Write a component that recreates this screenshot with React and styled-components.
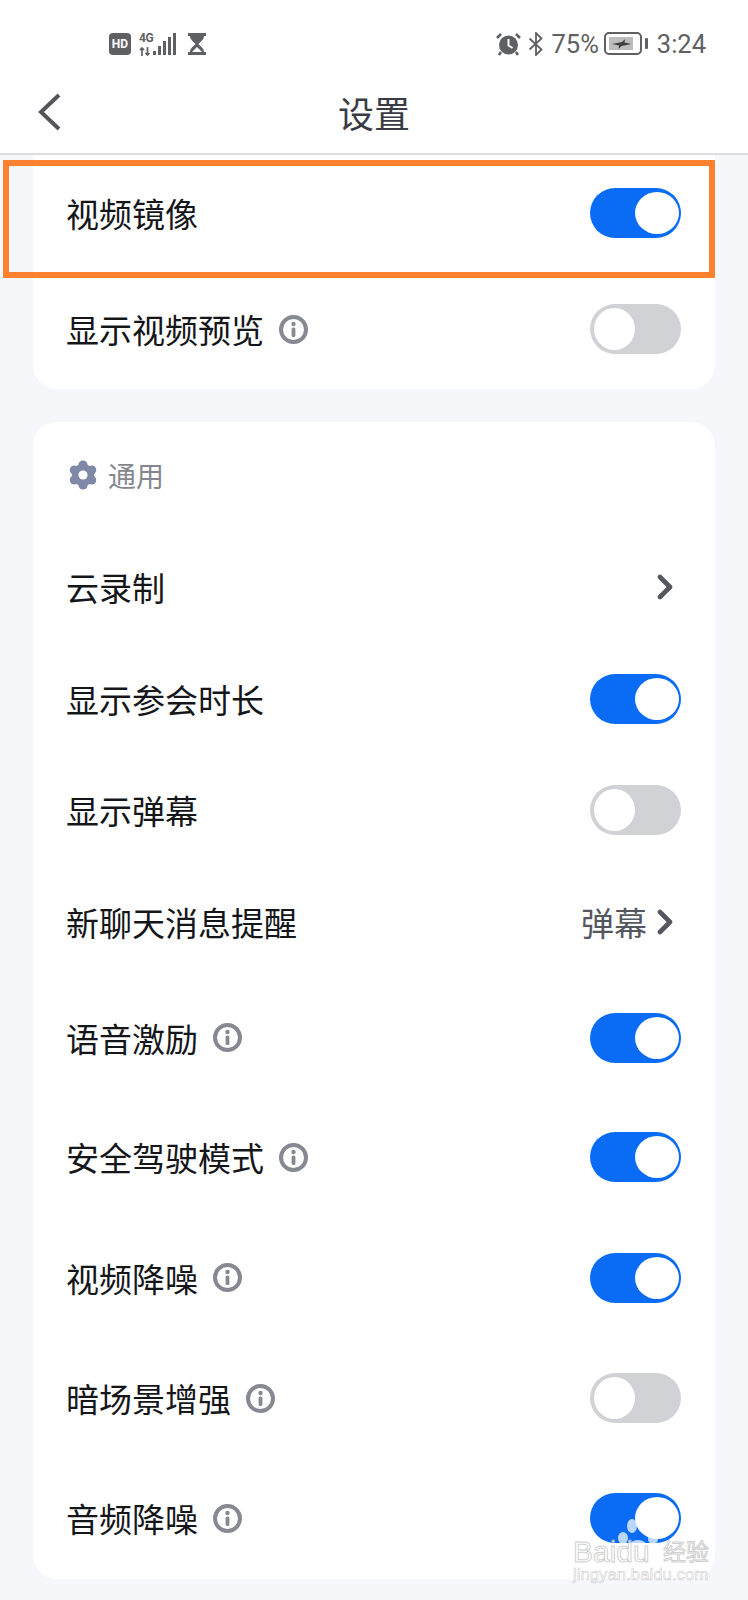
import React from "react";
import styled, { createGlobalStyle } from "styled-components";

const GlobalStyle = createGlobalStyle`
  html, body {
    margin: 0;
    padding: 0;
    background: #f6f7fb;
  }
  * {
    box-sizing: border-box;
  }
`;

const FONT = `"Noto Sans CJK SC", "Noto Sans", sans-serif`;

const Page = styled.div`
  position: relative;
  width: 748px;
  height: 1600px;
  overflow: hidden;
  background: #f6f7fb;
  font-family: ${FONT};
  color: #15161a;
`;

const Top = styled.div`
  background: #fff;
  border-bottom: 2px solid #dcdde0;
`;

const StatusBar = styled.div`
  height: 77px;
  padding: 10px 42px 0 109px;
  display: flex;
  align-items: center;
  justify-content: space-between;
  color: #5f6063;
  font-family: "Roboto", sans-serif;
`;

const StatusGroup = styled.div`
  display: flex;
  align-items: center;
  margin-left: ${(p) => p.$left || 0}px;
`;

const StatusText = styled.span`
  font-size: 25.5px;
  line-height: 30px;
  margin-left: ${(p) => p.$left || 0}px;
`;

const HdBadge = styled.span`
  width: 22px;
  height: 22px;
  border-radius: 4px;
  background: #5f6063;
  color: #fff;
  font: bold 12px/22px "Roboto", sans-serif;
  text-align: center;
`;

const Network = styled.div`
  margin-left: 8px;
  display: flex;
  align-items: center;
  height: 24px;
`;

const NetColumn = styled.div`
  width: 14px;
  height: 24px;
  display: flex;
  flex-direction: column;
  justify-content: space-between;
`;

const NetLabel = styled.span`
  font: bold 12px/12px "Roboto", sans-serif;
  letter-spacing: -0.5px;
  color: #5f6063;
`;

const NavBar = styled.div`
  height: 76px;
  padding: 0 36px 6px;
  display: grid;
  grid-template-columns: 1fr auto 1fr;
  align-items: center;
`;

const NavTitle = styled.div`
  font-size: 36px;
  line-height: 44px;
  color: #3a3b44;
`;

const Card = styled.section`
  margin: 0 33px 33px;
  background: #fff;
  border-radius: ${(p) => (p.$flatTop ? "0 0 24px 24px" : "24px")};
  padding: 0 34px ${(p) => p.$bottom}px 35px;
`;

const SectionHeader = styled.div`
  height: 109px;
  padding-bottom: 3px;
  display: flex;
  align-items: center;
  gap: 10px;
  color: #85878f;
  font-size: 28px;
`;

const Row = styled.div`
  height: ${(p) => p.$height}px;
  display: flex;
  align-items: center;
  justify-content: space-between;
`;

const RowLabel = styled.div`
  display: flex;
  align-items: center;
  gap: 15px;
  margin-left: -2px;
  font-size: 33px;
  line-height: 44px;
  color: #15161a;
`;

const RowValue = styled.div`
  display: flex;
  align-items: center;
  gap: 10px;
  margin-right: 8px;
  font-size: 33px;
  line-height: 44px;
  color: #55575f;
`;

const Toggle = styled.div`
  width: 91px;
  height: 50px;
  border-radius: 25px;
  padding: 4px ${(p) => (p.$on ? 2 : 4)}px;
  display: flex;
  justify-content: ${(p) => (p.$on ? "flex-end" : "flex-start")};
  background: ${(p) => (p.$on ? "#0a6cf5" : "#d0d2d6")};
`;

const Knob = styled.div`
  width: ${(p) => (p.$on ? 44 : 41)}px;
  height: 42px;
  border-radius: 50%;
  background: #fff;
`;

const Highlight = styled.div`
  position: absolute;
  left: 3px;
  top: 160px;
  width: 712px;
  height: 118px;
  border: 6px solid #fd812e;
  pointer-events: none;
`;

const Watermark = styled.div`
  position: absolute;
  left: 573px;
  top: 1516px;
  width: 136px;
  font-family: "Liberation Sans", "Noto Sans CJK SC", sans-serif;
  color: rgba(255, 255, 255, 0.75);
  -webkit-text-stroke: 1px rgba(165, 165, 165, 0.55);
  pointer-events: none;
`;

const Paw = styled.svg`
  display: block;
  margin-left: 44px;
  margin-bottom: -14px;
`;

const WatermarkTitle = styled.div`
  display: flex;
  align-items: center;
  justify-content: space-between;
  font-size: 30px;
  line-height: 28px;
`;

const WatermarkCn = styled.span`
  font-size: 23px;
`;

const WatermarkUrl = styled.div`
  font-size: 16.8px;
  line-height: 18px;
  white-space: nowrap;
  -webkit-text-stroke: 0.6px rgba(165, 165, 165, 0.55);
`;

const InfoIcon = () => (
  <svg width="29" height="29" viewBox="0 0 29 29">
    <circle cx="14.5" cy="14.5" r="12.5" fill="none" stroke="#868892" strokeWidth="4" />
    <circle cx="14.5" cy="9" r="2.2" fill="#868892" />
    <rect x="12.6" y="12.5" width="3.8" height="9.5" rx="1.6" fill="#868892" />
  </svg>
);

const ChevronRight = () => (
  <svg width="16" height="26" viewBox="0 0 16 26">
    <path d="M3 3l10 10L3 23" fill="none" stroke="#55575f" strokeWidth="4.6" strokeLinecap="round" strokeLinejoin="round" />
  </svg>
);

const BackIcon = () => (
  <svg width="26" height="40" viewBox="0 0 26 40">
    <path d="M23 3L5 20l18 17" fill="none" stroke="#55565c" strokeWidth="4" />
  </svg>
);

const GearIcon = () => {
  // rounded gear: six lobes round a disc, white hole in the middle
  const lobes = [0, 60, 120, 180, 240, 300];
  return (
    <svg width="30" height="30" viewBox="0 0 30 30">
      <circle cx="15" cy="15" r="11" fill="#7f89a6" />
      {lobes.map((deg) => (
        <circle
          key={deg}
          cx={15 + 10 * Math.sin((deg * Math.PI) / 180)}
          cy={15 - 10 * Math.cos((deg * Math.PI) / 180)}
          r="4.6"
          fill="#7f89a6"
        />
      ))}
      <circle cx="15" cy="15" r="4.6" fill="#fff" />
    </svg>
  );
};

const NetArrows = () => (
  <svg width="13" height="9" viewBox="0 0 13 9">
    <path d="M3 9V1M1 3l2-2 2 2M8.500 0v8M6.500 6l2 2 2-2" fill="none" stroke="#5f6063" strokeWidth="1.700" />
  </svg>
);

const Bars = () => (
  <svg width="23" height="24" viewBox="0 0 23 24">
    <rect x="0" y="19" width="3" height="4" fill="#5f6063" />
    <rect x="5" y="14" width="3" height="9" fill="#5f6063" />
    <rect x="10" y="9" width="3" height="14" fill="#5f6063" />
    <rect x="15" y="5" width="3" height="18" fill="#5f6063" />
    <rect x="20" y="1" width="3" height="22" fill="#5f6063" />
  </svg>
);

const Hourglass = () => (
  <svg width="18" height="22" viewBox="0 0 18 22">
    <path d="M0 0h18v3h-2c0 4-4 6-5.500 8 1.500 2 5.500 4 5.500 8h2v3H0v-3h2c0-4 4-6 5.500-8C6 9 2 7 2 3H0z" fill="#5f6063" />
    <path d="M9 14l5 5H4z" fill="#fff" />
  </svg>
);

const AlarmIcon = () => (
  <svg width="25" height="24" viewBox="0 0 25 24">
    <circle cx="12.500" cy="13" r="9.500" fill="#5f6063" />
    <path d="M12.500 7v6.500l4 2.500" fill="none" stroke="#fff" strokeWidth="2" />
    <path d="M1 6l4-4M24 6l-4-4" stroke="#5f6063" strokeWidth="2.500" />
    <path d="M5 20l-2 3M20 20l2 3" stroke="#5f6063" strokeWidth="2.500" />
  </svg>
);

const BluetoothIcon = () => (
  <svg width="16" height="24" viewBox="0 0 16 24">
    <path d="M1.500 6.500l12 11L8 23V1l5.500 5.500-12 11" fill="none" stroke="#5f6063" strokeWidth="1.800" />
  </svg>
);

const BatteryIcon = () => (
  <svg width="45" height="24" viewBox="0 0 45 24">
    <rect x="1" y="1" width="36" height="21" rx="4" fill="none" stroke="#5f6063" strokeWidth="2" />
    <rect x="5" y="5" width="24" height="13" fill="#bdbdbd" />
    <path d="M8 12l10-2 3-3-.500 3.500 7 1.500-10 2-3 3 .500-3.500z" fill="#3f4043" />
    <rect x="41" y="6" width="3" height="11" rx="1" fill="#5f6063" />
  </svg>
);

const PawIcon = () => (
  <Paw width="44" height="36" viewBox="0 0 44 36">
    <g fill="#fff" fillOpacity="0.72" stroke="none">
      <ellipse cx="6" cy="22" rx="5" ry="6" />
      <ellipse cx="15" cy="10" rx="5" ry="7" />
      <ellipse cx="28" cy="10" rx="5" ry="7" />
      <ellipse cx="36" cy="23" rx="5" ry="5" />
      <ellipse cx="21" cy="30" rx="9" ry="6" />
    </g>
  </Paw>
);

const firstRows = [
  { label: "视频镜像", on: true, height: 116 },
  { label: "显示视频预览", on: false, info: true, height: 116 },
];

const generalRows = [
  { label: "云录制", arrow: true, height: 112 },
  { label: "显示参会时长", on: true, height: 111 },
  { label: "显示弹幕", on: false, height: 112 },
  { label: "新聊天消息提醒", value: "弹幕", arrow: true, height: 112 },
  { label: "语音激励", on: true, info: true, height: 119 },
  { label: "安全驾驶模式", on: true, info: true, height: 120 },
  { label: "视频降噪", on: true, info: true, height: 121 },
  { label: "暗场景增强", on: false, info: true, height: 120 },
  { label: "音频降噪", on: true, info: true, height: 120 },
];

function SettingRow({ item }) {
  return (
    <Row $height={item.height}>
      <RowLabel>
        {item.label}
        {item.info && <InfoIcon />}
      </RowLabel>
      {item.arrow ? (
        <RowValue>
          {item.value}
          <ChevronRight />
        </RowValue>
      ) : (
        <Toggle $on={item.on}>
          <Knob $on={item.on} />
        </Toggle>
      )}
    </Row>
  );
}

function App() {
  return (
    <Page>
      <GlobalStyle />
      <Top>
        <StatusBar>
          <StatusGroup>
            <HdBadge>HD</HdBadge>
            <Network>
              <NetColumn>
                <NetLabel>4G</NetLabel>
                <NetArrows />
              </NetColumn>
              <Bars />
            </Network>
            <StatusGroup $left={12}>
              <Hourglass />
            </StatusGroup>
          </StatusGroup>
          <StatusGroup>
            <AlarmIcon />
            <StatusGroup $left={7}>
              <BluetoothIcon />
            </StatusGroup>
            <StatusText $left={7}>75%</StatusText>
            <StatusGroup $left={5}>
              <BatteryIcon />
            </StatusGroup>
            <StatusText $left={8}>3:24</StatusText>
          </StatusGroup>
        </StatusBar>
        <NavBar>
          <BackIcon />
          <NavTitle>设置</NavTitle>
          <span />
        </NavBar>
      </Top>

      <Card $flatTop $bottom={2}>
        {firstRows.map((item) => (
          <SettingRow key={item.label} item={item} />
        ))}
      </Card>

      <Card $bottom={1}>
        <SectionHeader>
          <GearIcon />
          通用
        </SectionHeader>
        {generalRows.map((item) => (
          <SettingRow key={item.label} item={item} />
        ))}
      </Card>

      <Highlight />
      <Watermark>
        <PawIcon />
        <WatermarkTitle>
          <span>Baidu</span>
          <WatermarkCn>经验</WatermarkCn>
        </WatermarkTitle>
        <WatermarkUrl>jingyan.baidu.com</WatermarkUrl>
      </Watermark>
    </Page>
  );
}

export default App;
